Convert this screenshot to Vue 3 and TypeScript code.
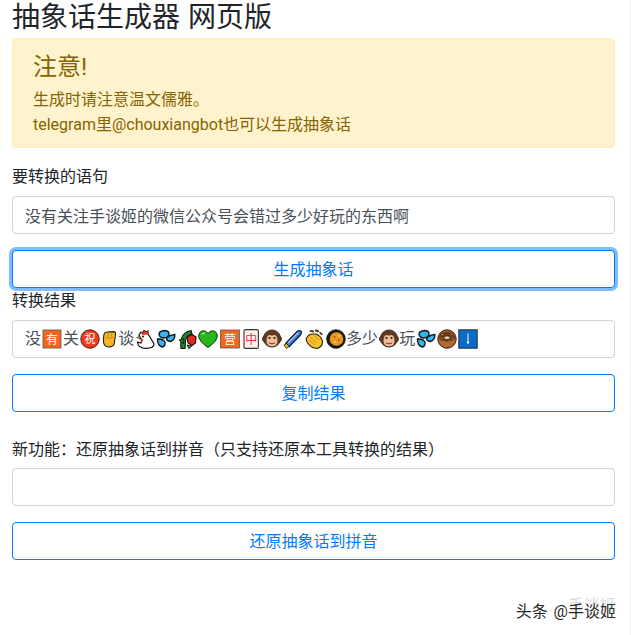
<script setup lang="ts">
// Emoji shapes are drawn in a 20x20 box
const icons: Record<string, string> = {
  you: `<rect x="1" y="1" width="18" height="18" fill="#f4661a" stroke="#555" stroke-width=".8"/><text x="10" y="14.5" font-size="12" text-anchor="middle" fill="#fff" font-family="Noto Sans CJK SC">有</text>`,
  zhu: `<circle cx="10" cy="10" r="9.2" fill="#ea3d1c" stroke="#5e170a" stroke-width="1"/><text x="10" y="14" font-size="11" text-anchor="middle" fill="#fff" font-family="Noto Sans CJK SC">祝</text>`,
  fist: `<path d="M4.5 4.5 Q5 2.5 8 2.3 L15 1.8 Q17.8 1.8 17.2 5 L16 14 Q15.5 18.8 10 18.8 Q5 18.8 4 14 Q3.4 9 4.5 4.5Z" fill="#f5b826" stroke="#2c2006" stroke-width="1.2"/><path d="M9 3v5M13 2.5v5M6 8.5 Q10 10 15 8.5" fill="none" stroke="#a8741a" stroke-width=".8"/>`,
  rooster: `<path d="M4 6 L6 3 L8 4 L9 1.5 L11 3 L13 2 L13 5 L15 8 L19 15 Q19 19.3 11 19.3 Q3 19.3 2.5 13 L6 14 L7 11 L5 8 Z" fill="#fff" stroke="#111" stroke-width="1.2"/><path d="M6 3 L8 4 L9 1.5 L11 3 L13 2 L13 5.5 L7 6Z" fill="#e23a1e"/><path d="M1.5 8.5 L5 7 L5 10Z" fill="#f5a81c" stroke="#111" stroke-width=".5"/><path d="M5 10 l1.5 3.5 l2-3Z" fill="#e23a1e"/><circle cx="8" cy="7.6" r="1" fill="#111"/>`,
  sweat: `<path d="M8 1.5 Q13 1.5 13 5 Q12.5 8.5 8 9 Q3 8.5 3 5 Q3 2.5 8 1.5Z" fill="#35b6ee" stroke="#0a1a22" stroke-width="1.4"/><path d="M18.8 5.5 Q19.2 11 14.5 12.5 Q10.5 12 10.5 9.5 Q12 6.5 18.8 5.5Z" fill="#35b6ee" stroke="#0a1a22" stroke-width="1.4"/><path d="M1.5 10 Q7 9.5 9 13 Q9.5 17.5 6 18 Q1.5 16.5 1.5 10Z" fill="#35b6ee" stroke="#0a1a22" stroke-width="1.4"/>`,
  rose: `<path d="M4 19.5 Q3 10 6.5 5.5 Q9 2.5 14 1.5 L15 5 Q9 6.5 8.5 12 L8 19.5Z" fill="#1c8a2c" stroke="#081806" stroke-width="1.1"/><path d="M10 8 L15 5.5 L19 8 L18.5 14 L15 16.5 L11 14Z" fill="#dc2b25" stroke="#2c0806" stroke-width="1.1"/><path d="M2 11 L7 10 L6.5 14.5Z" fill="#2b9c39" stroke="#081806" stroke-width=".9"/><path d="M10 16 L14.5 17 L12 19.7Z" fill="#2b9c39" stroke="#081806" stroke-width=".9"/>`,
  heart: `<path d="M10 18.5 Q1 12.5 .7 7 Q1 2 5.5 1.8 Q8.5 1.8 10 4.5 Q11.5 1.8 14.5 1.8 Q19 2 19.3 7 Q19 12.5 10 18.5Z" fill="#25b61a" stroke="#0e3009" stroke-width="1"/><path d="M4 5.5 Q5 4 7 4.2" fill="none" stroke="#c5f0be" stroke-width="1.2"/>`,
  ying: `<rect x=".6" y="1" width="18.8" height="18" fill="#f4661a" stroke="#555" stroke-width=".8"/><text x="10" y="14.5" font-size="12" text-anchor="middle" fill="#fff" font-family="Noto Sans CJK SC">营</text>`,
  zhong: `<rect x="3" y=".6" width="14.4" height="18.8" rx="1.5" fill="#f7f4ee" stroke="#333" stroke-width="1.1"/><text x="10.2" y="14.5" font-size="12" text-anchor="middle" fill="#ee2f3e" font-family="Noto Sans CJK SC">中</text>`,
  monkey: `<circle cx="3" cy="10" r="2.6" fill="#e9b48e" stroke="#2e1c10" stroke-width=".8"/><circle cx="17" cy="10" r="2.6" fill="#e9b48e" stroke="#2e1c10" stroke-width=".8"/><circle cx="10" cy="9.5" r="8.6" fill="#5f3a20" stroke="#2e1c10" stroke-width=".8"/><path d="M5 8.5 Q5.5 5.5 8 6 Q10 7 12 6 Q14.5 5.5 15 8.5 Q16.5 14 13.5 16.5 Q10 18 6.5 16.5 Q3.5 14 5 8.5Z" fill="#edbb98"/><circle cx="7.5" cy="9" r="1.1" fill="#221"/><circle cx="12.5" cy="9" r="1.1" fill="#221"/><path d="M7 14 Q10 15.6 13 14" fill="none" stroke="#7a3f2a" stroke-width="1"/>`,
  wand: `<path d="M2.5 14.5 L14.5 2 Q17 .8 18.5 2.5 Q19 4.5 17.5 6 L6 18 Z" fill="#3e78d8" stroke="#0a1830" stroke-width="1.1"/><path d="M5 14 L15 4" stroke="#a5c8f5" stroke-width="1.2"/><path d="M1 16 L3.5 14.5 L5.8 17.5 L3.5 19.5Z" fill="#f3c327" stroke="#2c2306" stroke-width=".9"/>`,
  clap: `<path d="M2.5 9 Q5 5 8 5 L12 5 Q17 7 18.5 12 Q19 17 14 19.3 Q8 19.7 4.5 15 Q1.5 12 2.5 9Z" fill="#f8c22e" stroke="#2c2006" stroke-width="1.1"/><path d="M6 2.5 Q8 .8 9.5 3.2 M11 1.8 Q13.5 .8 14.5 3.2 M15.5 3.8 Q17.5 3.8 17.8 6" fill="none" stroke="#4f3207" stroke-width="1.8"/><path d="M6 8 L13 14 M5 11 L11 16 M9 6 L15 11" stroke="#c98c1b" stroke-width=".8"/>`,
  pot: `<circle cx="10" cy="10" r="9.3" fill="#1d1a15" stroke="#0b0b0b" stroke-width=".8"/><circle cx="10.5" cy="10" r="6.8" fill="#ea9a20"/><circle cx="8.5" cy="8" r="1.1" fill="#c5501b"/><circle cx="13" cy="11" r="1.1" fill="#c5501b"/><circle cx="9" cy="13" r="1" fill="#f4cf5b"/><circle cx="13" cy="7" r=".9" fill="#f4cf5b"/>`,
  donut: `<circle cx="10" cy="10" r="9.2" fill="#b06a32" stroke="#2c1909" stroke-width="1"/><path d="M1.8 9 Q2.5 3 10 2.5 Q17.5 3 18.2 9 Q16 13 13 11.5 Q10 14 7 11.5 Q4 13 1.8 9Z" fill="#6d3d1a"/><ellipse cx="10" cy="8.7" rx="3" ry="1.8" fill="#f3d5a8" stroke="#2c1909" stroke-width=".7"/><path d="M5 6 l1-.8 M14 5 l1 .8 M4 9 l1 .4 M15 9.5 l1-.4" stroke="#f08fa6" stroke-width=".9"/>`,
  down: `<rect x=".8" y=".8" width="18.4" height="18.4" fill="#0a6cc6" stroke="#222" stroke-width=".9"/><path d="M10 4.5 V14" stroke="#fff" stroke-width="1"/><path d="M8.6 12.8 L10 15.4 L11.4 12.8Z" fill="#fff"/>`,
}

// Converted result: plain characters mixed with emoji
const result: { text?: string; icon?: string }[] = [
  { text: '没' }, { icon: 'you' }, { text: '关' }, { icon: 'zhu' }, { icon: 'fist' },
  { text: '谈' }, { icon: 'rooster' }, { icon: 'sweat' }, { icon: 'rose' }, { icon: 'heart' },
  { icon: 'ying' }, { icon: 'zhong' }, { icon: 'monkey' }, { icon: 'wand' }, { icon: 'clap' },
  { icon: 'pot' }, { text: '多少' }, { icon: 'monkey' }, { text: '玩' }, { icon: 'sweat' },
  { icon: 'donut' }, { icon: 'down' },
]
</script>

<template>
  <div class="page">
    <h3>抽象话生成器 网页版</h3>
    <div class="alert">
      <h4>注意!</h4>
      <p>生成时请注意温文儒雅。</p>
      <p class="second">telegram里@chouxiangbot也可以生成抽象话</p>
    </div>
    <div class="form-group">
      <label>要转换的语句</label>
      <input class="form-control" value="没有关注手谈姬的微信公众号会错过多少好玩的东西啊" readonly />
    </div>
    <button class="btn focused">生成抽象话</button>
    <label>转换结果</label>
    <div class="form-control result">
      <template v-for="(item, i) in result" :key="i">
        <span v-if="item.text">{{ item.text }}</span>
        <svg v-else class="emoji" :class="'emoji-' + item.icon" viewBox="0 0 20 20" v-html="icons[item.icon!]"></svg>
      </template>
    </div>
    <button class="btn">复制结果</button>
    <div class="form-group restore">
      <label>新功能&#xFF1A;还原抽象话到拼音&#xFF08;只支持还原本工具转换的结果&#xFF09;</label>
      <input class="form-control" readonly />
    </div>
    <button class="btn">还原抽象话到拼音</button>
    <div class="watermark">头条 @<span>手谈姬</span></div>
  </div>
</template>

<style scoped>
.page {
  position: relative;
  box-sizing: border-box;
  height: 635px;
  padding: 0 15px 0 12px;
  color: #212529;
  font-family: Roboto, "Noto Sans CJK SC", sans-serif;
  font-size: 16px;
  line-height: 24px;
  border-right: 1px solid #eee;
  overflow: hidden;
}

h3 {
  margin: 0 0 5px;
  padding-top: 3px;
  font-size: 28px;
  font-weight: 400;
  line-height: 30px;
  word-spacing: 1px;
}

.alert {
  padding: 14px 20px 10px;
  margin-bottom: 16px;
  color: #856404;
  background-color: #fff3cd;
  border: 1px solid #ffeeba;
  border-radius: 4px;
}

.alert h4 {
  margin: 0 0 7px;
  font-size: 24px;
  font-weight: 400;
  line-height: 28px;
}

.alert p {
  margin: 0;
}

.alert .second {
  margin-top: 1px;
}

label {
  display: block;
  padding-top: 1px;
  margin-bottom: 7px;
}

.form-group {
  margin-bottom: 16px;
}

.restore {
  margin-top: 24px;
}

.restore label {
  padding-top: 2px;
  margin-bottom: 6px;
}

.form-control {
  display: block;
  box-sizing: border-box;
  width: 100%;
  height: 38px;
  padding: 6px 12px;
  color: #495057;
  font: inherit;
  background: #fff;
  border: 1px solid #ced4da;
  border-radius: 4px;
  outline: none;
}

.result {
  display: flex;
  align-items: center;
  margin-bottom: 16px;
  white-space: nowrap;
}

.emoji {
  flex: none;
  width: 20px;
  height: 20px;
  margin: 0 0.6px;
}

.emoji-you {
  margin: 0 1px;
}

.emoji-fist {
  width: 18px;
  margin: 0;
}

.btn {
  display: block;
  box-sizing: border-box;
  width: 100%;
  height: 38px;
  padding: 7px 12px 5px;
  color: #007bff;
  font: inherit;
  background: #fff;
  border: 1px solid #007bff;
  border-radius: 4px;
}

.focused {
  box-shadow: 0 0 0 3px rgba(0, 123, 255, 0.5);
}

.watermark {
  position: absolute;
  top: 600px;
  right: 14px;
  color: #2a2a2a;
  font-size: 16px;
  word-spacing: 2px;
  white-space: nowrap;
  text-shadow: 0 0 2px #fff, 1px 1px 1px #fff;
}

.watermark span {
  text-shadow: 0 0 2px #fff, 1px 1px 1px #fff, 0 -6px 0 #ddd;
}
</style>

<style>
body {
  background: #fff;
}
</style>
